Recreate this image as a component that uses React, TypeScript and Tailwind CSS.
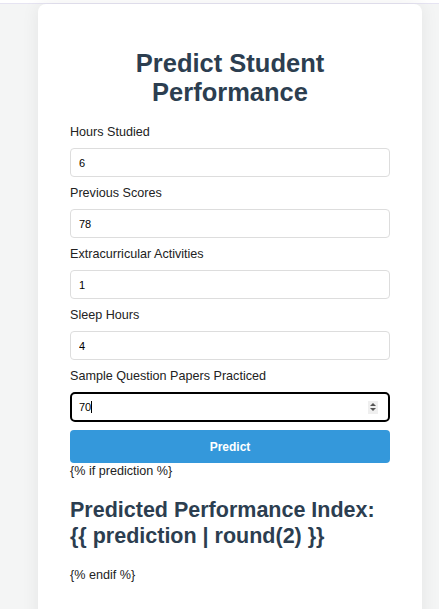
import React from 'react';

const fields = [
  { label: 'Hours Studied', value: '6' },
  { label: 'Previous Scores', value: '78' },
  { label: 'Extracurricular Activities', value: '1' },
  { label: 'Sleep Hours', value: '4' },
];

export default function App() {
  return (
    <div className="h-[609px] overflow-hidden bg-[#f4f5f5] font-['Liberation_Sans',Arial,sans-serif] text-[#222]">
      {/* top strip */}
      <div className="h-[4px] bg-white border-b border-[#e6e4f2]" />

      <div className="ml-[38px] w-[384px] h-[640px] bg-white rounded-t-lg shadow-[0_0_18px_rgba(0,0,0,0.07)] px-[32px] pt-[45px]">
        <h1 className="text-center text-[25.5px] leading-[29px] font-bold text-[#2c3e50] mb-[17px]">
          Predict Student
          <br />
          Performance
        </h1>

        <form onSubmit={(e) => e.preventDefault()}>
          {fields.map((f) => (
            <div key={f.label}>
              <label className="block text-[12.6px] leading-[16px] mb-[8px]">{f.label}</label>
              <input
                type="text"
                readOnly
                defaultValue={f.value}
                className="block w-full h-[29px] mb-[8px] rounded-[4px] border border-[#ddd] pl-[8px] text-[11px] text-black outline-none"
              />
            </div>
          ))}

          <label className="block text-[12.6px] leading-[16px] mb-[8px]">Sample Question Papers Practiced</label>
          {/* focused number input */}
          <div className="flex items-center h-[30px] mb-[8px] rounded-[5px] border-2 border-black pl-[7px] pr-[10px] text-[11px] text-black">
            <span>70</span>
            <span className="w-px h-[12px] bg-black" />
            <span className="ml-auto flex flex-col items-center justify-center gap-[2px] w-[10px] h-[13px] bg-[#efefef]">
              <svg width="6" height="3" viewBox="0 0 6 3">
                <path d="M0 3 L3 0 L6 3 Z" fill="#555" />
              </svg>
              <svg width="6" height="3" viewBox="0 0 6 3">
                <path d="M0 0 L3 3 L6 0 Z" fill="#555" />
              </svg>
            </span>
          </div>

          <button
            type="submit"
            className="block w-full h-[33px] rounded-[4px] bg-[#3498db] text-white text-[12px] font-bold"
          >
            Predict
          </button>
        </form>

        <div className="text-[12.6px] leading-[16px]">{'{% if prediction %}'}</div>
        <h2 className="mt-[18px] mb-[18px] text-[21.5px] leading-[26px] font-bold text-[#2c3e50]">
          Predicted Performance Index: {'{{ prediction | round(2) }}'}
        </h2>
        <div className="text-[12.6px] leading-[16px]">{'{% endif %}'}</div>
      </div>
    </div>
  );
}
